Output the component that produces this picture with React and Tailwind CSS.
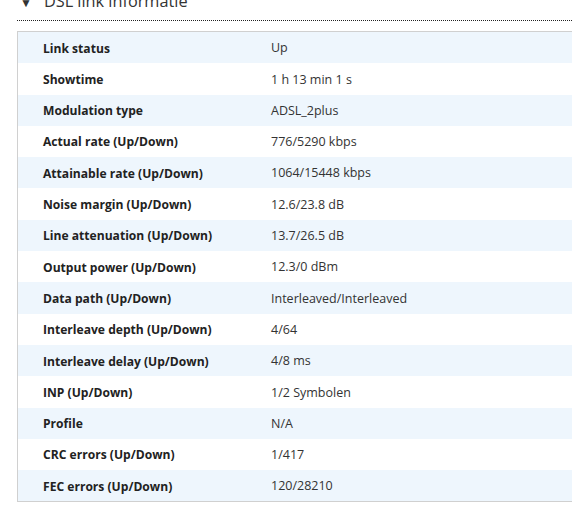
const rows = [
  ["Link status", "Up"],
  ["Showtime", "1 h 13 min 1 s"],
  ["Modulation type", "ADSL_2plus"],
  ["Actual rate (Up/Down)", "776/5290 kbps"],
  ["Attainable rate (Up/Down)", "1064/15448 kbps"],
  ["Noise margin (Up/Down)", "12.6/23.8 dB"],
  ["Line attenuation (Up/Down)", "13.7/26.5 dB"],
  ["Output power (Up/Down)", "12.3/0 dBm"],
  ["Data path (Up/Down)", "Interleaved/Interleaved"],
  ["Interleave depth (Up/Down)", "4/64"],
  ["Interleave delay (Up/Down)", "4/8 ms"],
  ["INP (Up/Down)", "1/2 Symbolen"],
  ["Profile", "N/A"],
  ["CRC errors (Up/Down)", "1/417"],
  ["FEC errors (Up/Down)", "120/28210"],
];

const App = () => {
  return (
    <div
      className="w-[572px] h-[516px] bg-white overflow-hidden text-[#333]"
      style={{ fontFamily: '"Open Sans", "Noto Sans", sans-serif' }}
    >
      <div className="h-[20px] pl-[20px] pb-[11px] flex items-end gap-[12px] text-[16.3px] leading-none text-[#333]">
        <span className="text-[12px]">▼</span>
        <span>DSL link informatie</span>
      </div>
      <div className="ml-[17px] border-t border-dotted border-[#222]" />
      <div className="ml-[17px] mt-[10px] border border-r-0 border-[#d0d0d0]">
        {rows.map(([label, value], i) => (
          <div
            key={label}
            className={`flex items-center h-[31.3px] pt-[2px] ${
              i % 2 === 0 ? "bg-[#eef6fd]" : "bg-white"
            }`}
          >
            <div className="w-[253px] pl-[25px] text-[12.1px] font-bold text-[#222]">{label}</div>
            <div className="text-[12.5px] text-[#333]">{value}</div>
          </div>
        ))}
      </div>
    </div>
  );
};

export default App;
